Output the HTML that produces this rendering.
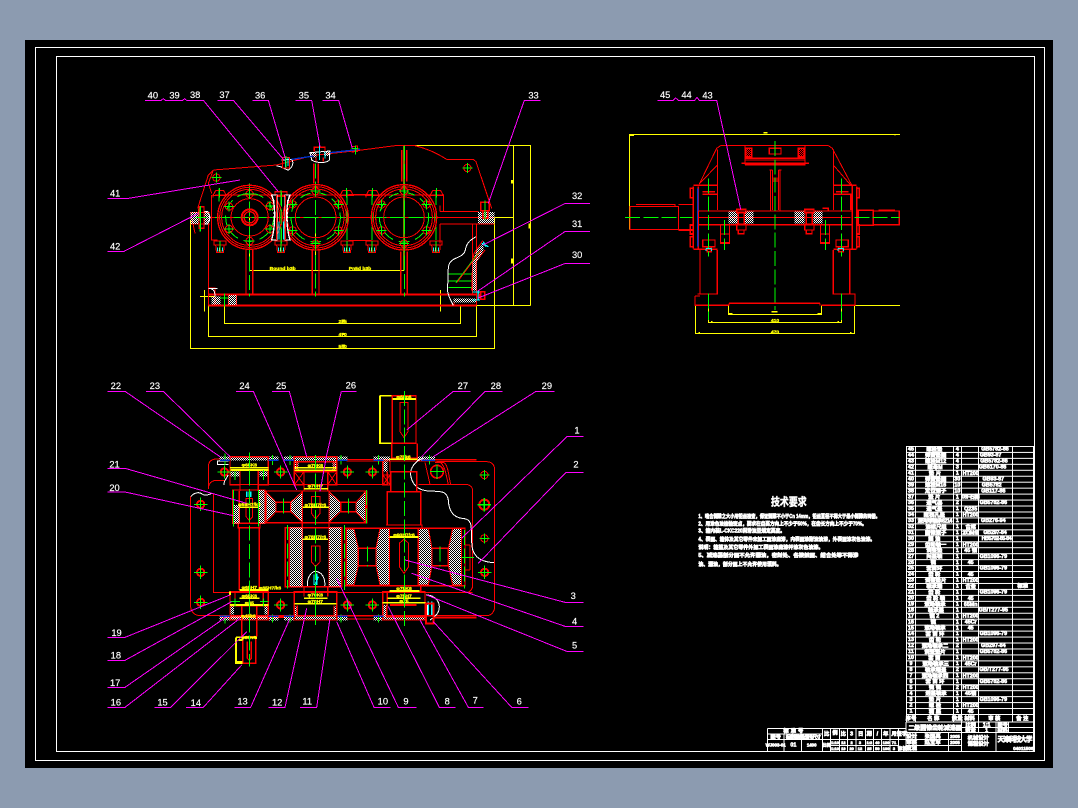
<!DOCTYPE html>
<html><head><meta charset="utf-8"><title>二级圆锥齿轮减速器</title>
<style>
html,body{margin:0;padding:0;background:#8c9bb0;width:1078px;height:808px;overflow:hidden}
svg{display:block;position:absolute;left:0;top:0}
text{font-family:"Liberation Sans","Noto Sans CJK SC",sans-serif}
.r{stroke:#f00}.g{stroke:#0f0;stroke-dasharray:45 10}.gs{stroke:#0f0}.y{stroke:#ff0}.m{stroke:#f0f}.w{stroke:#fff}.c{stroke:#0ff}.b{stroke:#03c}
.l text,text.l{fill:#fff;font-size:28px;stroke:#fff;stroke-width:.5}
.yt{fill:#ff0;stroke:#ff0;stroke-width:1;font-size:15px;font-weight:bold;text-anchor:middle}
.t{fill:#fff;stroke:#fff;stroke-width:2;font-size:16px;text-anchor:middle;font-weight:bold}
</style></head><body>
<svg width="1078" height="808" viewBox="0 0 1078 808" shape-rendering="crispEdges">
<defs>
<pattern id="h" width="6" height="6" patternUnits="userSpaceOnUse"><rect width="3" height="3" fill="#fff"/><rect x="3" y="3" width="3" height="3" fill="#fff"/></pattern>
<pattern id="hr" width="6" height="6" patternUnits="userSpaceOnUse"><rect width="3" height="3" fill="#f00"/><rect x="3" y="3" width="3" height="3" fill="#f00"/></pattern>
<pattern id="rows" width="18" height="17.870" patternUnits="userSpaceOnUse"><rect width="18" height="3" fill="#fff"/></pattern>
<g id="bc" fill="none" stroke-width="3"><circle r="11" class="r"/><path d="M-15 0H15M0-15V15" class="gs"/></g>
<g id="rb" fill="none" stroke-width="3"><circle r="11" class="r" stroke-width="6"/><path d="M-20 0H20M0-20V20" class="gs"/></g>
<g id="hb" fill="none" stroke-width="3"><path d="M-18 0H18V12H-18ZM-13 12L-11 30H11L13 12M-11 30V34H11V30" class="r"/><path d="M-7 20V32M7 20V32" class="c"/><path d="M-2 20V32" class="w"/><path d="M0 0V34" class="gs"/></g>
<g id="tb" fill="none" stroke-width="3"><path d="M-20 14L-12 0H12L20 14H-20ZM-20 14V20" class="r"/><path d="M0-8V20" class="gs"/></g>
</defs>
<rect x="25" y="40" width="1028" height="728" fill="#000"/>
<rect x="35.5" y="47.5" width="1009" height="713" fill="none" stroke="#fff"/>
<rect x="56.5" y="56.5" width="978" height="695" fill="none" stroke="#fff"/>

<!-- ============ FRONT VIEW ============ -->
<g transform="translate(100 80) scale(.33333)" fill="none" stroke-width="3">
<path class="y" d="M912 197H1292V676M1241 197V676M1184 412H1241M1020 676H1292M272 420V805H1184V412M325 676V769H1130V676M373 650V730H1081V676M449 412V571H912M647 412V571M912 197V571M313 630V695M1021 630V695M300 650H345"/>
<path class="y" stroke-width="6" d="M1236 300V310M1236 535V550M1288 430V445M725 722H735M725 762H735M725 797H735"/>
<text class="yt" x="548" y="570">Bound b3b</text><text class="yt" x="780" y="570">Pn5d b3b</text><text class="yt" x="728" y="729">295</text><text class="yt" x="728" y="768">470</text><text class="yt" x="728" y="804">540</text>

<!-- housing -->
<path class="r" d="M340 270L530 255L640 226L770 212L885 197H945C990 208 1020 225 1040 238H1120L1128 245L1175 385"/>
<path class="r" d="M340 270L325 285L293 385M340 270L325 310L335 340M272 398H330M272 432H330M325 432V676M330 412H1183M1020 395H1135M1020 432H1183M1020 376V395M1020 432V490M335 345V480H352M1040 238L1102 238"/>
<path class="r" d="M345 345H1030M745 343H815M745 482H815M1010 345H1030V395"/>
<path class="r" stroke-width="6" d="M325 643H1130M325 676H1130"/>
<path class="r" d="M1130 430V676M1118 432V640M325 624H345V676M385 645V676M410 645V676M295 385V398M272 398L285 460"/>
<path class="r" stroke-width="4" d="M438 505V643M458 505V643M637 510V643M657 510V643M902 515V643M922 515V643M905 210V305M920 210V305M641 250V310M655 250V310"/>
<path class="g" d="M449 310V650M647 250V650M913 197V650M345 412H545M555 412H745M815 412H1012M357 325V365M741 330V480M816 330V480M1008 330V480M545 335V490M300 378V455"/>

<!-- gear rings -->
<g class="r">
<circle cx="449" cy="412" r="96" stroke-width="4"/><circle cx="449" cy="412" r="90" stroke-width="3"/><circle cx="449" cy="412" r="84"/><circle cx="449" cy="412" r="56"/><circle cx="449" cy="412" r="24" stroke-width="6"/><circle cx="449" cy="412" r="17" stroke-width="4"/>
<circle cx="647" cy="412" r="98" stroke-width="4"/><circle cx="647" cy="412" r="92" stroke-width="3"/><circle cx="647" cy="412" r="85"/><circle cx="647" cy="412" r="61"/>
<circle cx="912" cy="412" r="98" stroke-width="4"/><circle cx="912" cy="412" r="92" stroke-width="3"/><circle cx="912" cy="412" r="85"/><circle cx="912" cy="412" r="61"/>
</g>
<g class="gs" stroke-dasharray="32 18"><circle cx="449" cy="412" r="72"/><circle cx="647" cy="412" r="74"/><circle cx="912" cy="412" r="74"/></g>
<use href="#bc" x="449" y="342"/><use href="#bc" x="449" y="483"/><use href="#bc" x="387" y="380"/><use href="#bc" x="510" y="378"/><use href="#bc" x="387" y="447"/><use href="#bc" x="510" y="447"/>
<use href="#bc" x="647" y="333"/><use href="#bc" x="647" y="491"/><use href="#bc" x="578" y="373"/><use href="#bc" x="715" y="373"/><use href="#bc" x="578" y="451"/><use href="#bc" x="715" y="451"/>
<use href="#bc" x="912" y="333"/><use href="#bc" x="912" y="491"/><use href="#bc" x="845" y="373"/><use href="#bc" x="980" y="373"/><use href="#bc" x="845" y="451"/><use href="#bc" x="980" y="451"/>
<use href="#bc" x="349" y="293"/><use href="#bc" x="1102" y="264"/>
<use href="#tb" x="359" y="332"/><use href="#tb" x="740" y="332"/><use href="#tb" x="818" y="332"/><use href="#tb" x="1010" y="332"/>
<use href="#hb" x="360" y="483"/><use href="#hb" x="543" y="483"/><use href="#hb" x="741" y="483"/><use href="#hb" x="816" y="483"/><use href="#hb" x="1008" y="483"/>

<!-- center bolt -->
<rect x="525" y="335" width="36" height="14" class="r" stroke-width="4"/>
<path d="M515 345C528 375 526 440 515 480H530V345ZM570 345C556 375 558 440 570 480H555V345Z" fill="#000" class="w" stroke-width="4"/>
<path class="r" d="M530 345V480M556 345V480"/><path class="c" d="M537 425V478M550 425V478"/><path class="g" d="M543 330V495"/>
<path class="w" d="M522 360V440M562 360V440" stroke-dasharray="6 6"/>

<!-- flanges -->
<rect x="272" y="396" width="25" height="36" fill="url(#h)"/><path d="M312 394H322C332 405 332 420 322 432H312Z" fill="url(#h)" class="w"/>
<path class="r" d="M297 380H312V445H297Z" stroke-width="4"/><path class="gs" d="M302 378V455M288 412H320"/>
<rect x="1134" y="396" width="50" height="34" fill="url(#h)"/><path class="r" stroke-width="4" d="M1142 367H1168V392H1142ZM1148 392V415H1163V392"/><path class="gs" d="M1155 362V420"/>
<path class="w" d="M352 625H325M325 625C345 625 345 640 345 650"/>
<rect x="335" y="650" width="26" height="24" fill="url(#h)"/><rect x="386" y="645" width="24" height="30" fill="url(#h)"/>
<path class="gs" d="M373 640V680M360 654H385"/>

<!-- top cover -->
<path d="M530 258C545 258 552 268 565 270C578 262 582 248 575 238L545 240" class="w"/>
<path d="M548 232H568V264H548Z" class="r"/><path d="M556 230V262M564 232V258" class="c"/><path class="gs" d="M558 228V262"/>
<path d="M630 218L690 213L688 240C680 250 650 250 635 240Z" class="w"/>
<rect x="632" y="218" width="18" height="14" fill="url(#h)"/><rect x="672" y="214" width="18" height="14" fill="url(#h)"/>
<path class="r" stroke-width="4" d="M643 215V202H675V215M648 232V245M670 232V245"/>
<path class="c" d="M658 195V240M675 214V236"/><path class="b" stroke-width="4" d="M575 238L640 228M690 218L780 208"/>
<path class="r" d="M755 200L772 198L772 214L755 216"/><path class="gs" d="M766 196V224M755 205L775 205"/>

<!-- right cutaway -->
<path class="w" d="M1128 470C1115 478 1100 485 1096 510C1090 535 1060 530 1050 548C1040 560 1048 590 1042 620C1040 640 1052 660 1060 676"/>
<path class="r" d="M1115 632L1118 540L1122 520L1148 482M1128 632V545L1155 510" />
<path d="M1118 632V545L1130 510L1150 490L1150 512L1130 545V632Z" fill="url(#h)"/>
<rect x="1060" y="655" width="68" height="12" fill="url(#h)"/>
<path class="gs" d="M1045 582H1115M1045 603H1115M1045 622H1115M1068 608L1138 515"/>
<path class="r" d="M1072 606L1142 512M1062 667V676"/>
<path class="c" stroke-width="4" d="M1118 636H1140M1135 632V662M1118 660H1140M1145 490L1165 500M1150 485L1158 500"/>
<path class="r" stroke-width="4" d="M1142 635H1154V658H1142ZM1138 640V655"/>

<!-- leaders -->
<path class="m" stroke-width="3" d="M135 61H183L190 56L196 61H248L254 56L260 61H310L535 335M352 61H400L552 240M457 61H505L556 235M586 61H635L660 200M667 61H716L757 205M1322 61H1273L1165 370M22 355H85L420 300M22 514H72L295 400"/>
</g>
<g class="l" transform="translate(100 80) scale(.33333)">
<text x="143" y="56">40</text><text x="208" y="56">39</text><text x="270" y="54">38</text><text x="358" y="54">37</text><text x="465" y="56">36</text><text x="596" y="56">35</text><text x="676" y="56">34</text><text x="1285" y="56">33</text><text x="30" y="350">41</text><text x="30" y="508">42</text>
</g>
<g fill="none" stroke="#f0f"><path d="M590 203.500H565L483 245M590 231.500H565L478 291M590 263.500H565L478 298"/></g>
<g fill="#fff" font-size="9.300" stroke="#fff" stroke-width=".15"><text x="572" y="199">32</text><text x="572" y="227">31</text><text x="572" y="258">30</text></g>

<!-- ============ SIDE VIEW ============ -->
<g transform="translate(610 80) scale(.33333)" fill="none" stroke-width="3">
<path class="y" d="M58 448V163H870M257 676V761H733V676H870M295 676V727H694V676M355 676V703H635V676M58 163V167H72M855 163V167"/>
<path class="y" stroke-width="5" d="M485 695H503M460 158H472M265 758H270M720 758H725M303 725H308M682 725H687M355 702H368M622 702H635"/>
<text class="yt" x="495" y="726">410</text><text class="yt" x="495" y="760">470</text>
<path class="r" d="M268 312L320 205L332 197H655L667 205L725 315M322 208V390M670 208V390M268 312L322 255M722 315L670 255"/>
<path class="r" stroke-width="4" d="M405 197V240H585V197M395 250H597M405 235H585M405 240V254M585 240V254H405M478 205H513V222H478Z"/>
<rect x="407" y="205" width="18" height="25" fill="url(#hr)" /><rect x="565" y="205" width="18" height="25" fill="url(#hr)"/>
<path class="r" stroke-width="4" d="M407 205H425V230H407ZM565 205H583V230H565Z"/>
<path class="r" stroke-width="3" d="M481 270V392M510 270V392M487 270V390M505 270V390M478 270H487M505 270H514"/><rect x="487" y="292" width="18" height="14" fill="#f00" opacity=".6"/>
<path class="r" d="M60 379H205V449H60ZM60 379V445M78 373H195V379M205 373H250V452H205M205 449H250"/>
<path class="r" stroke-width="4" d="M250 320V505M265 320V505M250 316H322M250 508H322M278 335H315M278 343H322M278 480H315V500H278ZM292 500V515H304V500"/>
<path class="b" stroke-width="4" d="M263 325V500M727 322V500"/>
<path class="r" stroke-width="5" d="M241 325H250V353H241ZM241 435H250V462H241ZM241 470H250V500H241ZM740 325H748V353H740ZM740 435H748V462H740ZM740 470H748V500H740Z"/>
<path class="r" stroke-width="4" d="M740 320V505M727 318V505M670 316H740M670 508H740M678 335H715M670 343H722V390M678 480H715V500H678ZM686 500V515H700V500"/>
<path class="r" d="M322 343V390M265 393H722M265 434H722M265 412H722M265 393V450"/>
<path class="r" stroke-width="4" d="M745 391H790V436H745ZM790 393H868V434H790M805 391H855"/>
<path class="r" stroke-width="4" d="M265 434H725M265 393H725"/>
<rect x="355" y="395" width="28" height="36" fill="url(#h)"/><rect x="405" y="395" width="25" height="36" fill="url(#h)"/><rect x="553" y="395" width="30" height="36" fill="url(#h)"/><rect x="610" y="395" width="27" height="36" fill="url(#h)"/>
<path class="r" stroke-width="4" d="M380 388H408V398H380ZM385 398V432M403 398V432M380 432H408V450H380ZM385 450V461H402V450M584 388H612V398H584ZM589 398V432M607 398V432M584 432H612V450H584ZM589 450V461H606V450M638 385H655V393"/>
<path class="r" d="M331 434V490H359V434M331 462H359M331 488H359M631 434V490H659V434M631 462H659M631 488H659"/>
<path class="r" stroke-width="4" d="M270 510V642H322V510M670 510V642H719V510M255 648V676H355M262 642H322M670 642H735V676H635M357 670H630M357 670V676M630 670V676M255 648H270"/>
<path class="g" d="M495 183V690M45 412H248M733 412H868M295 295V530M694 295V530M344 420V510M646 420V510M295 640V720M694 640V720"/>
<path class="c" stroke-width="3" d="M288 505H305M684 505H700M288 505V513M305 505V513M684 505V513M700 505V513"/>
<path class="m" d="M142 61H190L197 54L205 61H254L261 52L268 61H320L392 388"/>
</g>
<g class="l" transform="translate(610 80) scale(.33333)"><text x="150" y="54">45</text><text x="214" y="54">44</text><text x="277" y="56">43</text></g>

<!-- ============ TOP (SECTION) VIEW ============ -->
<g transform="translate(100 375) scale(.33333)" fill="none" stroke-width="3">
<!-- outer -->
<path class="r" d="M272 365V695C272 710 285 722 300 722H1160C1175 722 1184 708 1184 695V285C1184 270 1175 260 1160 260H1010M1130 253H740M1130 258H740"/>
<path class="r" d="M325 342V275C325 260 335 252 350 252H362M325 342C325 325 335 316 350 316H375M340 355V652H1100C1112 652 1118 640 1118 630V348C1118 335 1108 328 1095 328H955M340 652H1118M390 328H860"/>
<path class="r" stroke-width="4" d="M360 722H1130M360 727H560M740 732H820M1000 728H1130"/>
<path class="w" d="M272 365C280 355 295 348 308 358C320 365 330 355 340 355M385 258L352 258V268H385M385 300C375 315 370 325 372 330"/>
<path class="w" d="M968 250C945 258 930 280 932 300C935 320 945 345 985 348C1020 350 1040 345 1045 375C1046 400 1055 425 1085 430C1115 432 1115 445 1115 500C1115 535 1130 560 1182 563"/>
<path class="w" d="M978 660C1005 660 1018 680 1018 695C1018 715 1005 725 990 735"/>
<path class="w" d="M622 635C620 600 640 585 652 590C672 595 676 620 674 635"/>
<path class="c" stroke-width="4" d="M642 598V630M650 595V630M655 605L645 630M985 680V720M995 680V720"/>

<!-- hatch strips -->
<rect x="358" y="245" width="32" height="12" fill="url(#h)"/><rect x="390" y="245" width="115" height="12" fill="url(#h)"/><rect x="505" y="245" width="30" height="12" fill="url(#h)"/>
<rect x="552" y="245" width="190" height="12" fill="url(#h)"/><rect x="820" y="245" width="50" height="12" fill="url(#h)"/><rect x="950" y="245" width="55" height="12" fill="url(#h)"/>
<rect x="358" y="725" width="32" height="12" fill="url(#h)"/><rect x="390" y="725" width="115" height="12" fill="url(#h)"/><rect x="505" y="725" width="30" height="12" fill="url(#h)"/>
<rect x="552" y="725" width="190" height="12" fill="url(#h)"/><rect x="820" y="725" width="155" height="12" fill="url(#h)"/>
<rect x="390" y="290" width="30" height="14" fill="url(#h)"/><rect x="478" y="290" width="28" height="14" fill="url(#h)"/>
<rect x="582" y="256" width="13" height="30" fill="url(#h)"/><rect x="697" y="256" width="13" height="30" fill="url(#h)"/>
<rect x="848" y="258" width="14" height="32" fill="url(#h)"/>
<rect x="390" y="694" width="12" height="25" fill="url(#h)"/><rect x="494" y="694" width="12" height="25" fill="url(#h)"/>
<rect x="848" y="690" width="14" height="35" fill="url(#h)"/><rect x="583" y="695" width="10" height="28" fill="url(#h)"/><rect x="700" y="695" width="10" height="28" fill="url(#h)"/>

<!-- shaft 1 -->
<path class="r" stroke-width="4" d="M390 245H505M390 245V330H420M505 245V330H475M420 285H475M420 285V348M475 285V348M398 345H495V445H398ZM418 348V445M476 345V445M415 445V458H480V445M418 458V645M478 458V645"/>
<rect x="400" y="390" width="18" height="55" fill="url(#h)"/><rect x="476" y="345" width="18" height="100" fill="url(#h)"/>
<path class="r" d="M438 370H458V425L448 436L438 425Z"/>
<path class="r" stroke-width="4" d="M390 650H505V735H390ZM405 650V695M490 650V695M425 695V785M470 695V785M428 785H467V865H428ZM442 800V850L448 856L454 850V800M390 692H505"/>
<path class="y" stroke-width="5" d="M390 278H505M392 285H505M418 397H476M390 650V660M418 645H505M418 670H478M390 690H505M408 787H468V792M408 787V865H428M415 795H428M408 860H428"/>
<path class="y" stroke-width="5" d="M840 62H948M840 62V205H875"/>
<text class="yt" x="448" y="274">φ65K6</text><text class="yt" x="448" y="393">φ58H7/k6</text><text class="yt" x="448" y="642">φ65H7</text><text class="yt" x="448" y="667">φ65K6</text><text class="yt" x="448" y="688">φ65</text><text class="yt" x="510" y="644">φ65H7/k6</text><text class="yt" x="445" y="727">φ45k6</text><text class="yt" x="446" y="792">φ38n6</text>
<path class="c" stroke-width="4" d="M440 350V366M447 350V366M452 350V366"/>

<!-- shaft 2 -->
<path class="r" stroke-width="4" d="M583 245H710V330H683V290H612V330H583ZM583 260H710M590 260V290H702V260M612 290V348M683 290V348M612 348H683M495 348H800V443H495ZM495 350V443M800 350V443M607 350V443M687 350V443M528 382H572V410H528ZM722 382H768V410H722ZM607 443V458H687V443M556 458H725V635H556ZM607 458V635M687 458V635M612 635V650H683V635"/>
<path class="r" d="M583 290H612V330H583ZM683 290H710V330H683ZM583 290L612 330M612 290L583 330M683 290L710 330M710 290L683 330M634 365H660V415L647 432L634 415ZM634 513H660V560L647 575L634 560V513Z"/>
<path d="M498 350L528 382V410L498 442Z" fill="url(#h)" class="r"/><path d="M607 350L572 382V410L607 442Z" fill="url(#h)" class="r"/><path d="M687 350L722 382V410L687 442Z" fill="url(#h)" class="r"/><path d="M796 350L768 382V410L796 442Z" fill="url(#h)" class="r"/>
<rect x="568" y="458" width="39" height="177" fill="url(#h)"/><rect x="687" y="458" width="38" height="177" fill="url(#h)"/>
<path class="r" stroke-width="4" d="M568 458V635M556 465V635M725 458V635M583 650H710V735H583ZM592 692V722H702V692M612 650V665M683 650V665"/>
<path class="y" stroke-width="5" d="M583 278H710M583 286H710M612 341H684M607 397H687M607 493H684M612 670H683M583 686H710"/>
<text class="yt" x="646" y="276">φ70K6</text><text class="yt" x="646" y="337">φ70H7</text><text class="yt" x="646" y="394">φ78H7/r6</text><text class="yt" x="646" y="490">φ78H7/r6</text><text class="yt" x="646" y="665">φ70K6</text><text class="yt" x="646" y="684">φ70H7</text>

<!-- shaft 3 -->
<path class="r" stroke-width="4" d="M877 62H948V205H877ZM875 205V250M952 205V250M873 250H952M870 258V290H952M848 258H875M848 258V330H872M862 290V328M862 350H962V450H862ZM872 290V350M950 290V350M858 450H966V460H858M735 460H1095V632H735ZM735 460V632M868 460V632M955 460V632M1095 460V632M862 632H962V650H862M848 650H975V735H848ZM862 650V695M860 695V725H975V695"/>
<path class="r" d="M900 82H924V170L912 188L900 170ZM898 505V575L912 595L926 575V505L912 492Z"/>
<path class="r" d="M849 300H870V330H849ZM849 300L870 330M870 300L849 330"/>
<path class="r" d="M1095 510H1110M1095 585H1110M1110 510V585"/>
<path d="M740 462H762L775 520V572L762 630H740Z" fill="url(#h)" class="r"/><path d="M868 460H840L828 520V572L840 630H868Z" fill="url(#h)" class="r"/><path d="M955 460H985L996 520V572L985 630H955Z" fill="url(#h)" class="r"/><path d="M1085 460H1058L1045 520V572L1058 630H1085Z" fill="url(#h)" class="r"/>
<path class="r" stroke-width="4" d="M775 520H828V572H775ZM996 520H1045V572H996Z"/>
<path class="y" stroke-width="5" d="M877 72H948M868 253H952M868 486H955M868 648H958M848 683H978M862 670H962"/>
<text class="yt" x="912" y="70">φ60n6</text><text class="yt" x="910" y="250">φ75k6</text><text class="yt" x="912" y="484">φ90H7/r6</text><text class="yt" x="912" y="645">φ75K6</text><text class="yt" x="912" y="668">φ75H7</text><text class="yt" x="912" y="682">φ75</text>
<path class="r" stroke-width="6" d="M870 690H950"/>

<!-- greens -->
<path class="g" d="M448 232V875M646 240V750M913 48V755M734 450V645M1093 465V640M800 345V450M1020 515V575M802 515V575M550 370V425M745 370V425M562 450V640"/>
<path class="gs" d="M1085 548H1122M400 345V455M476 345V455M375 235V270M375 720V745M518 240V270M518 718V742M570 240V270M570 718V742M723 240V268M723 718V742M835 240V268M835 718V742M988 240V268M405 290V315M490 285V315M405 670V695M490 670V695M420 680H390M480 680H505"/>
<path class="b" stroke-width="4" d="M360 256H390M505 256H535M552 256H582M712 256H742M820 256H850M965 256H1005M360 724H390M505 724H535M552 724H582M712 724H742M820 724H850"/>
<path class="r" stroke-width="6" d="M978 685H1000V745H978Z"/><path class="w" d="M982 690V720"/>

<!-- bolts -->
<use href="#rb" x="373" y="291"/><use href="#rb" x="542" y="291"/><use href="#rb" x="742" y="291"/><use href="#rb" x="817" y="291"/>
<use href="#rb" x="542" y="690"/><use href="#rb" x="742" y="690"/><use href="#rb" x="817" y="690"/>
<use href="#rb" x="302" y="388"/><use href="#rb" x="302" y="592"/><use href="#rb" x="302" y="682"/>
<use href="#rb" x="1154" y="592"/>
<use href="#bc" x="1153" y="300"/><use href="#bc" x="1153" y="490"/>
<g fill="none" stroke-width="4"><circle cx="1153" cy="389" r="15" class="r" stroke-width="6"/><path d="M1133 389H1173M1153 369V409" class="gs"/></g>
<g fill="none" stroke-width="5"><circle cx="1011" cy="290" r="19" class="r"/><path d="M990 290H1032M1011 268V312" class="gs" stroke-width="3"/></g>
<path class="r" d="M975 262L990 328M1005 262H1030C1045 268 1045 300 1052 328M1020 262C1035 270 1038 300 1045 328"/>

<!-- leaders -->
<path class="m" d="M22 49H75L360 245M138 49H190L390 245M408 49H460L590 345M516 49H568L620 245M724 49H770M724 49L680 240L660 350M1112 49H1060L920 165M1208 49H1155L965 245M1364 49H1308L1000 245M1450 184H1402L1085 490M1450 292H1398L1135 565M1450 682H1395L915 555M1450 754H1395L935 595M1450 829H1400L980 660M1286 997H1235L1000 740M1150 997H1105L960 735M1066 997H1018L865 695M950 997H895L710 610M872 997H822L710 740M600 997H650L690 730M505 997H555L620 700M403 997H452L570 730M258 997H310L425 870M163 997H212L440 770M22 997H75L420 730M22 937H75L380 725M22 856H75L395 680M22 787H75L390 660M22 351H75L400 422M22 280H75L440 385"/>
</g>
<g class="l" transform="translate(100 375) scale(.33333)">
<text x="32" y="42">22</text><text x="149" y="42">23</text><text x="418" y="42">24</text><text x="528" y="42">25</text><text x="737" y="40">26</text><text x="1073" y="42">27</text><text x="1172" y="42">28</text><text x="1325" y="42">29</text>
<text x="1423" y="175">1</text><text x="1420" y="277">2</text><text x="1412" y="672">3</text><text x="1416" y="748">4</text><text x="1416" y="820">5</text>
<text x="1250" y="988">6</text><text x="1118" y="986">7</text><text x="1034" y="988">8</text><text x="910" y="988">9</text><text x="833" y="988">10</text><text x="607" y="988">11</text><text x="516" y="991">12</text><text x="412" y="988">13</text><text x="272" y="993">14</text><text x="172" y="991">15</text><text x="32" y="991">16</text><text x="30" y="933">17</text><text x="32" y="850">18</text><text x="34" y="783">19</text><text x="28" y="348">20</text><text x="28" y="277">21</text>
</g>

<!-- ============ TECH REQUIREMENTS ============ -->
<g transform="translate(680 480) scale(.33333)" fill="#fff" stroke="#fff" stroke-width="2" font-size="16" font-weight="bold">
<text x="273" y="77" font-size="32" textLength="107" lengthAdjust="spacingAndGlyphs" stroke-width="1.500">技术要求</text>
<text x="55" y="114" textLength="545" lengthAdjust="spacingAndGlyphs">1、啮合侧隙之大小用铅丝检查，保证侧隙不小于Cn 14mm，铅丝直径不得大于最小侧隙的两倍。</text>
<text x="55" y="137" textLength="505" lengthAdjust="spacingAndGlyphs">2、用涂色法检验斑点，要求在齿高方向上不少于50%，在齿长方向上不少于70%。</text>
<text x="55" y="157" textLength="260" lengthAdjust="spacingAndGlyphs">3、箱内装L-CKC220润滑油至规定高度。</text>
<text x="55" y="183" textLength="530" lengthAdjust="spacingAndGlyphs">4、表面、箱体及其它零件未加工面涂底漆，内表面涂耐油油漆，外表面涂灰色油漆。</text>
<text x="55" y="207" textLength="375" lengthAdjust="spacingAndGlyphs">说明：箱盖及其它零件外加工表面涂底漆并涂灰色油漆。</text>
<text x="55" y="231" textLength="480" lengthAdjust="spacingAndGlyphs">5、减速器剖分面不允许漏油，密封处、各接触面、结合处等不得渗</text>
<text x="55" y="258" textLength="250" lengthAdjust="spacingAndGlyphs">油、漏油，剖分面上不允许使用填料。</text>
</g>

<!-- ============ BOM TABLE ============ -->
<g transform="translate(900 440) scale(.33333)">
<rect x="19" y="18" width="381" height="807" fill="url(#rows)"/>
<path d="M19 18V846M46 18V846M160 18V846M184 18V846M236 18V846M338 18V846M400 18V935M19 846H400" stroke="#fff" stroke-width="3" fill="none"/>
<g class="t" transform="translate(0 .2) scale(1 .9925)">
<g>
<text x="33" y="32">45</text><text x="33" y="50">44</text><text x="33" y="68">43</text><text x="33" y="86">42</text><text x="33" y="104">41</text><text x="33" y="122">40</text><text x="33" y="140">39</text><text x="33" y="158">38</text><text x="33" y="176">37</text><text x="33" y="194">36</text><text x="33" y="212">35</text><text x="33" y="230">34</text><text x="33" y="248">33</text><text x="33" y="266">32</text><text x="33" y="284">31</text><text x="33" y="302">30</text><text x="33" y="320">29</text><text x="33" y="338">28</text><text x="33" y="356">27</text><text x="33" y="374">26</text><text x="33" y="392">25</text><text x="33" y="410">24</text><text x="33" y="428">23</text><text x="33" y="446">22</text><text x="33" y="464">21</text><text x="33" y="482">20</text><text x="33" y="500">19</text><text x="33" y="518">18</text><text x="33" y="536">17</text><text x="33" y="554">16</text><text x="33" y="572">15</text><text x="33" y="590">14</text><text x="33" y="608">13</text><text x="33" y="626">12</text><text x="33" y="644">11</text><text x="33" y="662">10</text><text x="33" y="680">9</text><text x="33" y="698">8</text><text x="33" y="716">7</text><text x="33" y="734">6</text><text x="33" y="752">5</text><text x="33" y="770">4</text><text x="33" y="788">3</text><text x="33" y="806">2</text><text x="33" y="824">1</text>
<text x="33" y="846">序号</text>
</g>
<g>
<text x="103" y="33">螺栓垫</text><text x="107" y="51">弹簧垫圈</text><text x="107" y="69">螺栓M12</text><text x="105" y="87">螺母M</text><text x="105" y="105">垫 片</text><text x="107" y="123">弹簧垫圈</text><text x="107" y="141">螺栓M16</text><text x="107" y="159">定位销子</text><text x="103" y="177">垫 片</text><text x="103" y="195">通气器</text><text x="103" y="213">通气盖</text><text x="103" y="231">窥视孔盖</text><text x="105" y="249" textLength="104">深沟球轴承6214</text><text x="108" y="267">油标尺组</text><text x="107" y="285">圆锥滚子</text><text x="103" y="303">挡 油</text><text x="107" y="321">齿轮轴一</text><text x="103" y="339">调整垫</text><text x="103" y="357">闷盖轴</text><text x="100" y="375">键</text><text x="103" y="393">套筒环</text><text x="103" y="411">齿 轮</text><text x="107" y="429">调整垫片</text><text x="103" y="447">轴承端</text><text x="103" y="465">齿 轮</text><text x="107" y="483">齿 轮 轴</text><text x="105" y="501">滚动轴承</text><text x="108" y="519">轴承盖</text><text x="103" y="537">键 2</text><text x="100" y="555">键</text><text x="105" y="573">滚动轴承</text><text x="105" y="591">套 筒 环</text><text x="105" y="609">齿 轮</text><text x="105" y="627">滚动轴承二</text><text x="105" y="645">调整垫片</text><text x="103" y="663">套 筒</text><text x="107" y="681">滚动轴承三</text><text x="107" y="699">轴承端盖</text><text x="105" y="717">滚动轴承四</text><text x="105" y="735">套 筒 环</text><text x="105" y="753">键 键</text><text x="108" y="771">透盖轴承</text><text x="105" y="789">垫 片</text><text x="105" y="807">螺 栓</text><text x="105" y="825">箱 座</text>
<text x="100" y="846">名 称</text>
</g>
<g>
<text x="172" y="32">4</text><text x="172" y="50">4</text><text x="172" y="68">4</text><text x="172" y="86">3</text><text x="172" y="104">1</text><text x="172" y="122">30</text><text x="172" y="140">10</text><text x="172" y="158">10</text><text x="172" y="176">1</text><text x="172" y="194">2</text><text x="172" y="212">1</text><text x="172" y="230">1</text><text x="172" y="248">1</text><text x="172" y="266">1</text><text x="172" y="284">1</text><text x="172" y="302">1</text><text x="172" y="320">1</text><text x="172" y="338">1</text><text x="172" y="356">1</text><text x="172" y="374">1</text><text x="172" y="392">1</text><text x="172" y="410">1</text><text x="172" y="428">1</text><text x="172" y="446">1</text><text x="172" y="464">1</text><text x="172" y="482">1</text><text x="172" y="500">1</text><text x="172" y="518">1</text><text x="172" y="536">1</text><text x="172" y="554">1</text><text x="172" y="572">1</text><text x="172" y="590">1</text><text x="172" y="608">1</text><text x="172" y="626">2</text><text x="172" y="644">1</text><text x="172" y="662">1</text><text x="172" y="680">1</text><text x="172" y="698">2</text><text x="172" y="716">1</text><text x="172" y="734">1</text><text x="172" y="752">2</text><text x="172" y="770">1</text><text x="172" y="788">1</text><text x="172" y="806">1</text><text x="172" y="824">1</text>
<text x="172" y="846">数量</text>
</g>
<g>
<text x="212" y="105">HT200</text><text x="212" y="177" textLength="54">08F石棉</text><text x="212" y="213">Q235</text><text x="212" y="231">HT200</text><text x="212" y="267">合成</text><text x="212" y="285" textLength="50">20CrMnTi</text><text x="212" y="321">HT200</text><text x="212" y="339">45 钢</text><text x="212" y="375">45</text><text x="212" y="411">45</text><text x="212" y="429">HT200</text><text x="212" y="447">合金</text><text x="212" y="483">45</text><text x="212" y="501">65Mn</text><text x="212" y="537">HT200</text><text x="212" y="555">45Cr</text><text x="212" y="573">45</text><text x="212" y="609">HT200</text><text x="212" y="663">HT200</text><text x="212" y="681">45Cr</text><text x="212" y="717">HT200</text><text x="212" y="753">HT200</text><text x="212" y="771">45钢</text><text x="212" y="807">HT200</text><text x="212" y="825">45</text>
<text x="209" y="846">材料</text>
</g>
<g>
<text x="285" y="32">GB5782-86</text><text x="272" y="50">GB93-87</text><text x="282" y="68">GB5782-86</text><text x="278" y="86">GB6170-86</text><text x="280" y="122">GB93-87</text><text x="275" y="140">GB5782</text><text x="280" y="158">GB117-86</text><text x="280" y="194">GB5782-86</text><text x="280" y="248">GB276-94</text><text x="285" y="284" textLength="70">GB297-84</text><text x="290" y="302" textLength="90">HB5702-85-84</text><text x="280" y="356">GB1096-79</text><text x="280" y="392">GB1096-79</text><text x="280" y="464">GB1096-79</text><text x="280" y="518">GB/T277-95</text><text x="280" y="590">GB1096-79</text><text x="280" y="626">GB297-84</text><text x="280" y="644">GB5782-86</text><text x="282" y="698">GB/T277-95</text><text x="280" y="734">GB5782-86</text><text x="280" y="788">GB1096-79</text>
<text x="283" y="846">审 核</text>
<text x="368" y="446">标准</text>
<text x="367" y="846">备 注</text>
</g>
</g>
</g>

<!-- ============ TITLE BLOCK ============ -->
<g transform="translate(760 720) scale(.33333)" fill="none" stroke="#fff" stroke-width="3">
<path d="M438 6V94M438 38H820M438 58H604M438 76H604M438 94H820M604 6V94M708 6V94M820 6V94M565 38V94M468 38V94M656 6V38M745 6V38M604 22H820M22 25H438V94M22 25V94H438M22 42H188M22 58H438M188 25V94M72 42V94M125 42V94M212 25V94M238 25V94M262 25V94M288 25V94M316 25V94M340 25V94M364 25V94M390 25V94M415 25V94M212 76H415"/>
<g stroke-width="1" fill="#fff" stroke="#fff">
<text x="100" y="38" class="t" textLength="60">标 准 号</text><text x="47" y="55" class="t">图号</text><text x="130" y="55" class="t" textLength="105" style="font-size:13px">标准规格及型号尺寸</text>
<text x="47" y="80" class="t" style="font-size:13px">WJ003-01</text><text x="100" y="80" class="t">01</text><text x="155" y="80" class="t" style="font-size:13px">1400</text><text x="200" y="80" class="t" style="font-size:12px">比例</text>
<text x="200" y="46" class="t">比</text><text x="225" y="44" class="t">例</text><text x="250" y="46" class="t">比</text><text x="275" y="46" class="t">3</text><text x="302" y="46" class="t">日</text><text x="328" y="46" class="t">期</text><text x="352" y="46" class="t">/</text><text x="377" y="46" class="t">年</text><text x="402" y="46" class="t">月</text><text x="426" y="46" class="t">签字</text>
<text x="225" y="72" class="t" style="font-size:12px">1:10</text><text x="250" y="72" class="t" style="font-size:12px">12</text><text x="275" y="72" class="t" style="font-size:12px">2</text><text x="300" y="72" class="t" style="font-size:12px">3</text><text x="328" y="72" class="t" style="font-size:12px">1:2</text><text x="352" y="72" class="t" style="font-size:12px">40</text><text x="378" y="72" class="t" style="font-size:12px">120</text><text x="402" y="72" class="t" style="font-size:12px">71</text>
<text x="225" y="90" class="t" style="font-size:12px">1:10</text><text x="250" y="90" class="t" style="font-size:12px">19</text><text x="275" y="90" class="t" style="font-size:12px">20</text><text x="300" y="90" class="t" style="font-size:12px">12</text><text x="328" y="90" class="t" style="font-size:12px">25</text><text x="352" y="90" class="t" style="font-size:12px">50</text><text x="378" y="90" class="t" style="font-size:12px">100</text><text x="402" y="90" class="t" style="font-size:12px">3</text><text x="427" y="90" class="t" style="font-size:14px">审核</text>
<text x="525" y="30" class="t" textLength="160" style="font-size:18px">二级圆锥齿轮减速器</text><text x="632" y="19" class="t">比例</text><text x="632" y="36" class="t">数量</text><text x="680" y="19" class="t">1:1</text><text x="680" y="36" class="t">1</text><text x="728" y="19" class="t">图号</text><text x="728" y="36" class="t">材料</text>
<text x="455" y="54" class="t">设计</text><text x="455" y="72" class="t">审核</text><text x="455" y="90" class="t">批准</text><text x="518" y="54" class="t">张国亮</text><text x="518" y="72" class="t">赵宝军</text><text x="585" y="54" class="t" style="font-size:13px">2005</text><text x="585" y="72" class="t" style="font-size:13px">2005</text>
<text x="655" y="58" class="t">机械设计</text><text x="655" y="77" class="t">课程设计</text>
<text x="765" y="64" class="t" textLength="105" style="font-size:20px">天津科技大学</text><text x="790" y="90" class="t" style="font-size:14px">04011508</text>
</g>
</g>
</svg>
</body></html>
